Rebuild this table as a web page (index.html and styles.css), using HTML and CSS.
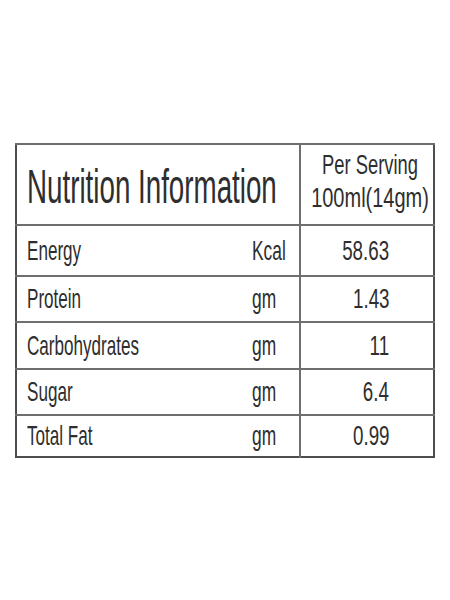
FILE: index.html
```html
<!DOCTYPE html>
<html lang="en">
<head>
    <meta charset="UTF-8">
    <meta name="viewport" content="width=device-width, initial-scale=1.0">
    <title>Nutrition Information</title>
    <link rel="stylesheet" href="styles.css">
</head>
<body>
    <div class="panel">
        <table class="nutrition">
            <colgroup>
                <col class="col-name">
                <col class="col-unit">
                <col class="col-value">
            </colgroup>
            <thead>
                <tr class="head-row">
                    <th colspan="2" class="title"><span>Nutrition Information</span></th>
                    <th class="serving">
                        <span class="serving-line">Per Serving</span>
                        <span class="serving-qty">100ml(14gm)</span>
                    </th>
                </tr>
            </thead>
            <tbody>
                <tr class="row-energy">
                    <td class="name"><span>Energy</span></td>
                    <td class="unit"><span>Kcal</span></td>
                    <td class="value"><span>58.63</span></td>
                </tr>
                <tr class="row-protein">
                    <td class="name"><span>Protein</span></td>
                    <td class="unit"><span>gm</span></td>
                    <td class="value"><span>1.43</span></td>
                </tr>
                <tr class="row-carbs">
                    <td class="name"><span>Carbohydrates</span></td>
                    <td class="unit"><span>gm</span></td>
                    <td class="value"><span>11</span></td>
                </tr>
                <tr class="row-sugar">
                    <td class="name"><span>Sugar</span></td>
                    <td class="unit"><span>gm</span></td>
                    <td class="value"><span>6.4</span></td>
                </tr>
                <tr class="row-fat">
                    <td class="name"><span>Total Fat</span></td>
                    <td class="unit"><span>gm</span></td>
                    <td class="value"><span>0.99</span></td>
                </tr>
            </tbody>
        </table>
    </div>
</body>
</html>
```

FILE: styles.css
```css
body {
    margin: 0;
    background-color: #ffffff;
    font-family: "Liberation Sans", Arial, sans-serif;
    color: #2e2e2e;
}
.panel {
    padding: 143px 0 0 15px;
}
.nutrition {
    border-collapse: collapse;
    table-layout: fixed;
    width: 418px;
    border: 2px solid #4d4d4d;
}
.col-name {
    width: 225px;
}
.col-unit {
    width: 59px;
}
.col-value {
    width: 134px;
}
th, td {
    padding: 0;
    font-weight: normal;
    vertical-align: middle;
    white-space: nowrap;
    border-top: 2px solid #6e6e6e;
}
th span, td span {
    display: inline-block;
}
.head-row {
    height: 81px;
}
.row-energy {
    height: 51px;
}
.row-protein {
    height: 46px;
}
.row-carbs {
    height: 47px;
}
.row-sugar {
    height: 46px;
}
.row-fat {
    height: 42px;
}
.title {
    text-align: left;
    padding: 5px 0 0 10px;
    font-size: 48px;
    line-height: 1;
}
.title span {
    transform: scaleX(0.578);
    transform-origin: left center;
}
.serving {
    text-align: center;
    padding: 0 0 6px 6px;
    font-size: 27px;
    line-height: 33px;
    border-left: 2px solid #6e6e6e;
}
.serving span {
    display: block;
    margin: 0 -30px;
    transform-origin: center center;
}
.serving-line {
    transform: scaleX(0.68);
}
.serving-qty {
    transform: scaleX(0.74);
}
td {
    font-size: 28px;
    line-height: 1;
}
.name {
    padding-left: 10px;
}
.name span {
    transform: scaleX(0.61);
    transform-origin: left center;
}
.unit {
    padding-left: 11px;
}
.unit span {
    transform: scaleX(0.62);
    transform-origin: left center;
}
.value {
    text-align: right;
    padding-right: 44px;
    border-left: 2px solid #6e6e6e;
}
.value span {
    transform: scaleX(0.67);
    transform-origin: right center;
}
```
